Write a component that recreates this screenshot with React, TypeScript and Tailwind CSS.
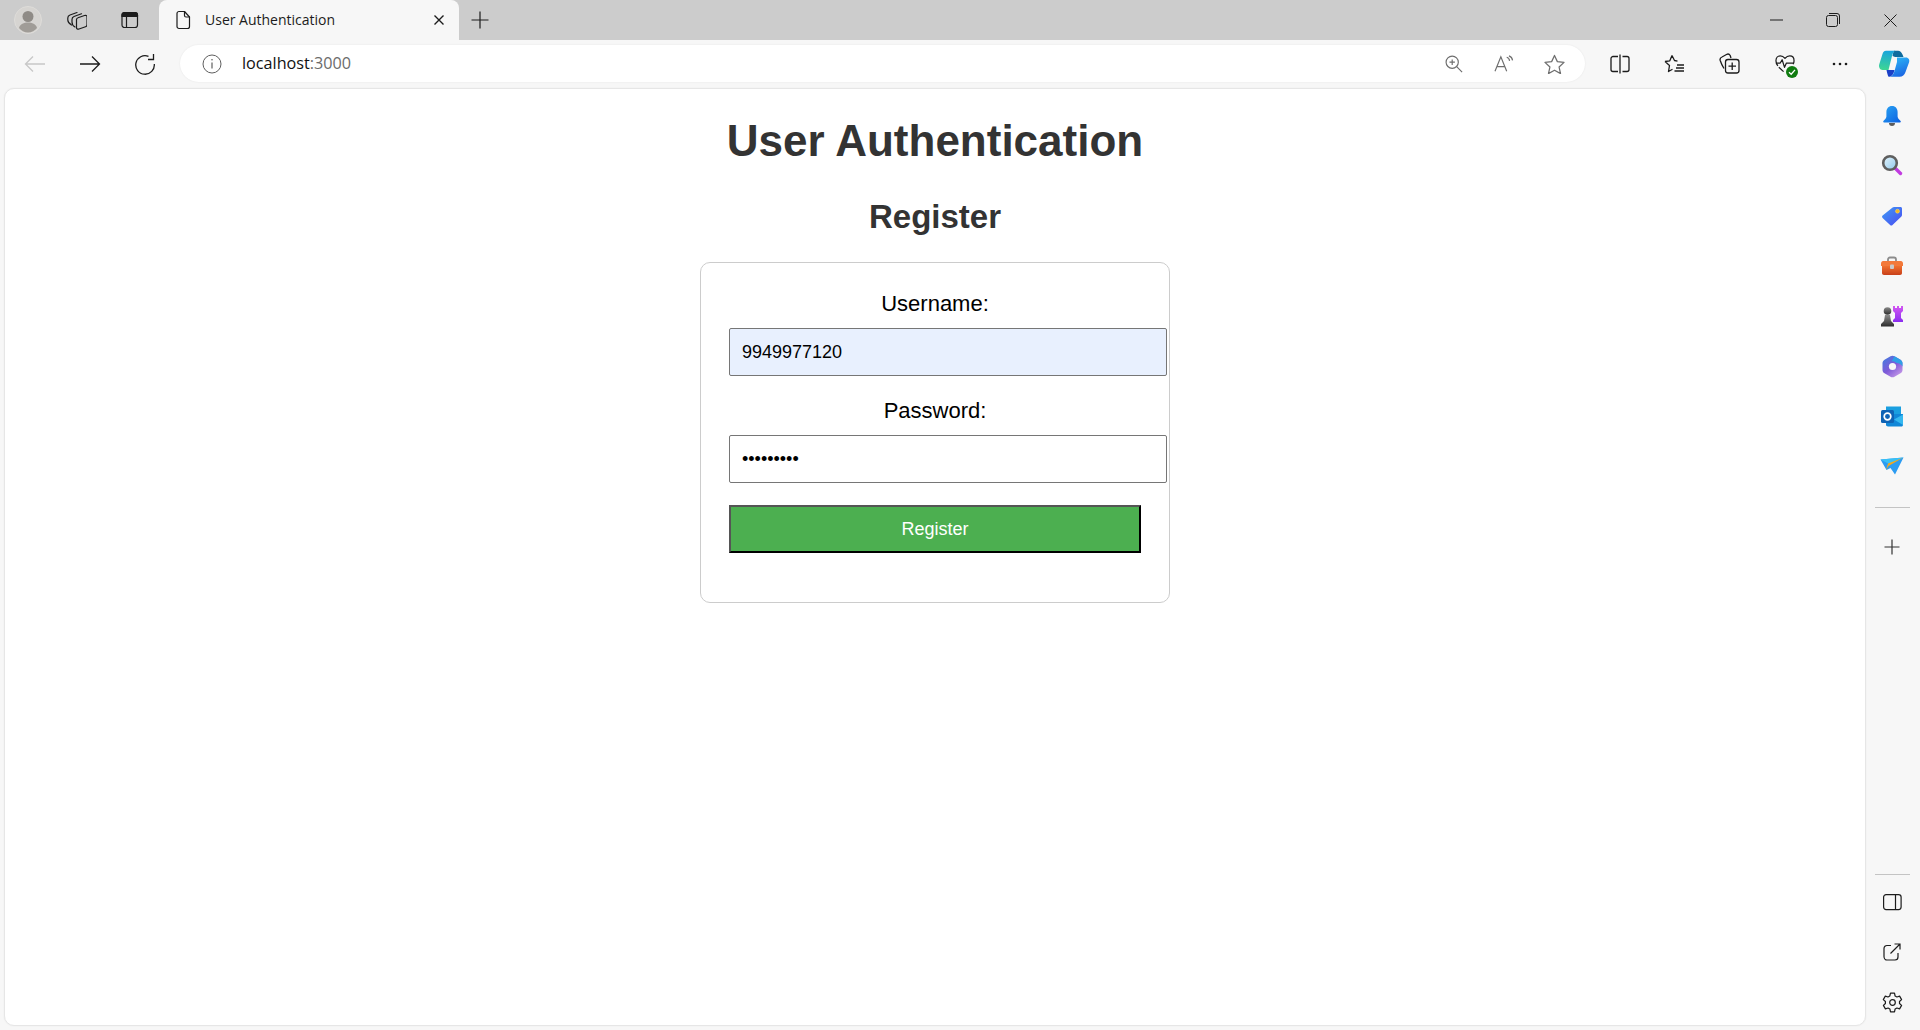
import React from "react";

const S = ({ size = 20, children, className = "" }: { size?: number; children: React.ReactNode; className?: string }) => (
  <svg width={size} height={size} viewBox="0 0 20 20" fill="none" stroke="#1c1c1c" strokeWidth={1.2} strokeLinecap="round" strokeLinejoin="round" className={className}>
    {children}
  </svg>
);

const Btn = ({ children, className = "w-[55px]" }: { children: React.ReactNode; className?: string }) => (
  <div className={`flex h-full shrink-0 items-center justify-center ${className}`}>{children}</div>
);

const SideBtn = ({ children }: { children: React.ReactNode }) => (
  <div className="flex h-[50px] w-full shrink-0 items-center justify-center">{children}</div>
);

function Copilot() {
  return (
    <svg width="32" height="28" viewBox="0 0 32 28">
      <defs>
        <linearGradient id="cpB" x1="0.3" y1="0" x2="0.7" y2="1">
          <stop offset="0" stopColor="#2ab4f6" />
          <stop offset="1" stopColor="#1b62e2" />
        </linearGradient>
        <linearGradient id="cpC" x1="0.5" y1="0" x2="0.4" y2="1">
          <stop offset="0" stopColor="#18a4dd" />
          <stop offset="1" stopColor="#3ed693" />
        </linearGradient>
      </defs>
      <path d="M16 .7h4c2 0 3.500 1.300 4.500 3.800l1 2.500H17l-2.500-1c.5-3 1-4.500 1.500-5.300z" fill="#0f6c9e" />
      <path d="M8 .7h9c-2 1.300-2.500 3.300-3 5.300l-3.500 14h-6c-2.500 0-4-3-3.300-5.500L4.500 4C5 2 6 .7 8 .7z" fill="url(#cpC)" />
      <path d="M8.500 20h8.100c-1.100 4.500-2.600 6-5.100 6.700h-1c-1-1.700-1.500-4.700-2-6.700z" fill="#1a3fc7" />
      <path d="M19 7.500h9c2.500 0 4 2.500 3 5L27.500 22c-1 3-3 4.700-6 4.700H12c2-.7 3.500-2.200 4.500-5.700L19 12z" fill="url(#cpB)" />
    </svg>
  );
}

function Bell() {
  return (
    <svg width="20" height="22" viewBox="0 0 20 22">
      <defs>
        <linearGradient id="bl" x1="0" y1="0" x2="1" y2="1">
          <stop offset="0" stopColor="#2aa5f4" />
          <stop offset="1" stopColor="#0b5fe0" />
        </linearGradient>
      </defs>
      <path d="M7 18h6a3 3 0 0 1-6 0z" fill="#5c5c5c" />
      <path d="M10 1c3.600 0 5.600 2.700 5.600 6v4.500c0 1.500 1.300 2.800 3 4.500.4.500.2 1.500-.6 1.500H2c-.8 0-1-1-.6-1.500 1.700-1.700 3-3 3-4.500V7C4.400 3.700 6.400 1 10 1z" fill="url(#bl)" />
    </svg>
  );
}

function SearchIcon() {
  return (
    <svg width="22" height="22" viewBox="0 0 22 22" className="-mt-[2px]">
      <defs>
        <linearGradient id="gl" x1="0" y1="0" x2="1" y2="1">
          <stop offset="0" stopColor="#e6f4fc" />
          <stop offset="1" stopColor="#8ec9ec" />
        </linearGradient>
      </defs>
      <path d="M14 14l5.500 5.500" stroke="#c13be0" strokeWidth="3.400" strokeLinecap="round" />
      <circle cx="9" cy="9" r="6.800" fill="url(#gl)" stroke="#5f5f5f" strokeWidth="2.600" />
    </svg>
  );
}

function Tag() {
  return (
    <svg width="22" height="20" viewBox="0 0 22 20">
      <defs>
        <linearGradient id="tg" x1="0" y1="0" x2="1" y2="1">
          <stop offset="0" stopColor="#3f9cf4" />
          <stop offset="1" stopColor="#4a4af2" />
        </linearGradient>
      </defs>
      <path d="M13 1h6.500C20.400 1 21 1.600 21 2.500V9c0 .6-.2 1-.6 1.400L11.500 19c-.7.700-1.700.700-2.400 0L1.600 12c-.7-.7-.7-1.700 0-2.400L11.600 1.600C12 1.200 12.500 1 13 1z" fill="url(#tg)" />
      <circle cx="16.500" cy="5.200" r="2" fill="#f5b921" stroke="#f8d878" strokeWidth=".5" />
    </svg>
  );
}

function Toolbox() {
  return (
    <svg width="24" height="20" viewBox="0 0 24 20">
      <defs>
        <linearGradient id="tb" x1="0" y1="0" x2="0" y2="1">
          <stop offset="0" stopColor="#f0702e" />
          <stop offset="1" stopColor="#c8401a" />
        </linearGradient>
      </defs>
      <path d="M8 6V3.500C8 2.500 8.800 1.500 10 1.500h4c1.200 0 2 1 2 2V6" fill="none" stroke="#8c8c8c" strokeWidth="1.800" />
      <path d="M1 7.500C1 6 2 5 3 5h18c1 0 2 1 2 2.500V10H1z" fill="#f3793a" />
      <path d="M2 10h20v7c0 1.200-.8 2-2 2H4c-1.200 0-2-.8-2-2z" fill="url(#tb)" />
      <rect x="10" y="8.500" width="4" height="4.500" rx="1" fill="#c9c9c9" />
    </svg>
  );
}

function Chess() {
  return (
    <svg width="24" height="22" viewBox="0 0 24 22">
      <defs>
        <linearGradient id="pw" x1="0" y1="0" x2="0" y2="1">
          <stop offset="0" stopColor="#8a8a8a" />
          <stop offset="1" stopColor="#2d2d2d" />
        </linearGradient>
        <linearGradient id="rk" x1="0" y1="0" x2="0" y2="1">
          <stop offset="0" stopColor="#d458f2" />
          <stop offset="1" stopColor="#8a2df0" />
        </linearGradient>
      </defs>
      <path d="M13 1h2v2h2V1h2v2h2V1h2v5l-2 2v5l2 2v2H13v-2l2-2V8l-2-2z" fill="url(#rk)" />
      <circle cx="7.500" cy="6" r="3.800" fill="url(#pw)" />
      <path d="M5 10h5l1 6 3 3v2.500H1V19l3-3z" fill="url(#pw)" />
    </svg>
  );
}

function M365() {
  return (
    <svg width="21" height="23" viewBox="0 0 21 23">
      <defs>
        <linearGradient id="m1" x1="0" y1="0" x2="0.8" y2="1">
          <stop offset="0" stopColor="#3a7fe0" />
          <stop offset=".55" stopColor="#7f5ad8" />
          <stop offset="1" stopColor="#c79ae8" />
        </linearGradient>
      </defs>
      <path d="M8.500 1.200c1.200-.7 2.800-.7 4 0l6 3.500c1.200.7 2 2 2 3.400v6.800c0 1.400-.8 2.700-2 3.400l-6 3.500c-1.200.7-2.800.7-4 0l-6-3.500C1.300 17.600.5 16.300.5 14.900V8.100c0-1.400.8-2.700 2-3.400z" fill="url(#m1)" />
      <path d="M12.500 1.200l6 3.500c1.200.7 2 2 2 3.400v3.400c-1.500-2-3-3.500-6-3.500-1.500-1.500-3.500-2-5-1.500z" fill="#2f9fe6" />
      <circle cx="10.500" cy="11.500" r="3.600" fill="#f7f7f7" />
    </svg>
  );
}

function Outlook() {
  return (
    <svg width="22" height="21" viewBox="0 0 22 21">
      <rect x="5" y="0.500" width="15" height="8" fill="#1a9fe0" />
      <rect x="5" y="8" width="8" height="7" fill="#0a78d4" />
      <path d="M12 8h10v11c0 .8-.7 1.500-1.500 1.500H7c-1 0-2-.8-2-1.500v-4h7z" fill="#1187d8" />
      <path d="M22 8.500V19l-9-5.500z" fill="#35b8f0" />
      <rect x="0" y="4" width="13" height="13" rx="1.500" fill="#0f63b5" />
      <circle cx="6.500" cy="10.500" r="3.300" fill="none" stroke="#fff" strokeWidth="1.700" />
    </svg>
  );
}

function Drop() {
  return (
    <svg width="24" height="18" viewBox="0 0 24 18">
      <path d="M.500 2.500 23.500.500 15 17.500l-4.500-6.500L6.500 13z" fill="#2c9cf2" />
      <path d="M.500 2.500 9 7l14.500-6.500z" fill="#38c0f6" />
      <path d="M6 13 8 6.500 22.500 1 8.500 9z" fill="#f5a81c" />
    </svg>
  );
}

export default function App() {
  return (
    <div className="flex h-[1030px] w-[1920px] flex-col overflow-hidden bg-[#f7f7f7] font-['Open_Sans','Noto_Sans',sans-serif] text-[#1c1c1c]">
      {/* Tab strip */}
      <div className="flex h-[40px] shrink-0 items-center bg-[#cccccc]">
        <div className="flex h-full w-[53px] shrink-0 items-center justify-center pl-[3px]">
          <svg width="28" height="28" viewBox="0 0 28 28">
            <circle cx="14" cy="14" r="13.500" fill="#d6d4d1" stroke="#dedcd9" />
            <circle cx="14" cy="10.500" r="5.500" fill="#8f8b86" />
            <path d="M5 22c1-4 5-5.500 9-5.500s8 1.500 9 5.500c-2 2.500-5.500 4.500-9 4.500S7 24.500 5 22z" fill="#a09c97" />
          </svg>
        </div>
        <Btn className="w-[48px]">
          <S>
            <path d="M9.500 9.500c0-1 .5-1.500 1.500-1.800l6.500-2.200c1.500-.5 2.500.3 2.500 1.500v7.500c0 1.300-.5 2-1.500 2.300L12 19c-1.500.5-2.500-.2-2.500-1.500z" />
            <path d="M8 17c-2-1-3-3-3-5V9.500c0-1.500.7-2.500 2-3l7.500-2.700" />
            <path d="M4.500 15C2 13.500.8 12 .8 10V8c0-1.500.7-2.500 2.200-3l7-2.500" />
          </S>
        </Btn>
        <Btn className="w-[58px]">
          <S size={20}>
            <rect x="2" y="2.500" width="15.500" height="15" rx="2.500" />
            <path d="M2 6.500V5a2.500 2.500 0 0 1 2.500-2.500H15A2.500 2.500 0 0 1 17.500 5v1.500z" fill="#1c1c1c" />
            <path d="M6.500 6.500v11" />
          </S>
        </Btn>
        {/* Active tab */}
        <div className="flex h-full w-[300px] shrink-0 items-center rounded-t-[8px] bg-[#f7f7f7]">
          <div className="flex w-[46px] shrink-0 justify-center pl-[2px]">
            <S size={20}>
              <path d="M4 3.500C4 2.500 5 1.500 6 1.500h5.500l5 5.500v9.500c0 1-1 2-2 2H6c-1 0-2-1-2-2z" />
              <path d="M11.500 1.500V5.500c0 1 .7 1.500 1.500 1.500h3.500" />
            </S>
          </div>
          <span className="flex-1 text-[14px] leading-none whitespace-nowrap">User Authentication</span>
          <div className="flex w-[40px] shrink-0 justify-center">
            <svg width="12" height="12" viewBox="0 0 12 12" stroke="#1c1c1c" strokeWidth="1.400">
              <path d="M1.500 1.500l9 9M10.500 1.500l-9 9" />
            </svg>
          </div>
        </div>
        <Btn className="w-[42px]">
          <svg width="18" height="18" viewBox="0 0 18 18" stroke="#1c1c1c" strokeWidth="1.200">
            <path d="M9 .500v17M.500 9h17" />
          </svg>
        </Btn>
        <div className="flex-1" />
        <Btn className="w-[58px]">
          <svg width="13" height="2" viewBox="0 0 13 2" stroke="#1c1c1c" strokeWidth="1"><path d="M0 1h13" /></svg>
        </Btn>
        <Btn className="w-[58px] pr-[2px]">
          <svg width="14" height="14" viewBox="0 0 14 14" fill="none" stroke="#1c1c1c" strokeWidth="1">
            <rect x=".5" y="2.500" width="11" height="11" rx="2" />
            <path d="M3 .5h8a2.500 2.500 0 0 1 2.500 2.500v8" />
          </svg>
        </Btn>
        <Btn className="w-[57px] pr-[2px]">
          <svg width="13" height="13" viewBox="0 0 13 13" stroke="#1c1c1c" strokeWidth="1"><path d="M.5.5l12 12M12.500.5l-12 12" /></svg>
        </Btn>
      </div>

      {/* Toolbar */}
      <div className="flex h-[48px] shrink-0 items-center pb-[1px] pl-[7px]">
        <Btn>
          <svg width="22" height="18" viewBox="0 0 22 18" fill="none" stroke="#c8c8c8" strokeWidth="1.300"><path d="M21 9H1.500M9 1.500 1.500 9 9 16.500" /></svg>
        </Btn>
        <Btn>
          <svg width="22" height="18" viewBox="0 0 22 18" fill="none" stroke="#1c1c1c" strokeWidth="1.300"><path d="M1 9h19.500M13 1.500 20.500 9 13 16.500" /></svg>
        </Btn>
        <Btn>
          <svg width="22" height="22" viewBox="0 0 22 22" fill="none" stroke="#1c1c1c" strokeWidth="1.300">
            <path d="M14.500 3.300A9.300 9.300 0 1 0 20.300 11" />
            <path d="M19.500 1v5.500H14" />
          </svg>
        </Btn>
        <div className="ml-[8px] flex h-[37px] flex-1 items-center rounded-full bg-white pr-[6px] shadow-[0_0_2px_rgba(0,0,0,0.08)]">
          <div className="flex w-[62px] shrink-0 justify-center pl-[2px]">
            <svg width="20" height="20" viewBox="0 0 20 20" fill="none" stroke="#5f5f5f" strokeWidth="1">
              <circle cx="10" cy="10" r="9" />
              <path d="M10 8.500v6" strokeWidth="1.200" />
              <circle cx="10" cy="5.800" r=".8" fill="#5f5f5f" stroke="none" />
            </svg>
          </div>
          <span className="flex-1 text-[16.200px] leading-none text-[#111]">
            localhost<span className="text-[#6b6b6b]">:3000</span>
          </span>
          <div className="flex w-[50px] shrink-0 justify-center">
            <svg width="18" height="18" viewBox="0 0 20 20" fill="none" stroke="#6e6e6e" strokeWidth="1.300">
              <circle cx="8" cy="8" r="6.800" />
              <path d="M13 13l6 6M8 5v6M5 8h6" />
            </svg>
          </div>
          <div className="flex w-[50px] shrink-0 justify-center">
            <svg width="20" height="18" viewBox="0 0 22 20" fill="none" stroke="#6e6e6e" strokeWidth="1.300">
              <path d="M1 18 7.500 2 14 18M3.300 13h8.400" />
              <path d="M14 2.500c2 .5 3 2 3.200 4M16.500 1c2.200.7 3.700 2.500 4 5" />
            </svg>
          </div>
          <div className="flex w-[50px] shrink-0 justify-center">
            <svg width="21" height="20" viewBox="0 0 22 21" fill="none" stroke="#6e6e6e" strokeWidth="1.300" strokeLinejoin="round">
              <path d="M11 1.500 14 8l7 .8-5.200 4.800 1.500 7L11 17l-6.300 3.600 1.500-7L1 8.800 8 8z" />
            </svg>
          </div>
        </div>
        <div className="w-[7px] shrink-0" />
        <Btn>
          <svg width="20" height="20" viewBox="0 0 20 20" fill="none" stroke="#1c1c1c" strokeWidth="1.300">
            <path d="M8 2.500H3C2 2.500 1 3.500 1 4.500v11c0 1 1 2 2 2h5M10 .5v19M12.500 2.500H17c1 0 2 1 2 2v11c0 1-1 2-2 2h-4.500" />
          </svg>
        </Btn>
        <Btn>
          <svg width="21" height="20" viewBox="0 0 21 20" fill="none" stroke="#1c1c1c" strokeWidth="1.300" strokeLinejoin="round">
            <path d="M8 1.500 10.500 6.500l3 .6M1 7.500l4.500 4-1 6 4-2.200M1 7.500l4.800-.7L8 1.500" />
            <path d="M13 11h7M12 14h8M10.500 17h9.500" />
          </svg>
        </Btn>
        <Btn>
          <svg width="21" height="21" viewBox="0 0 21 21" fill="none" stroke="#1c1c1c" strokeWidth="1.300">
            <path d="M5 15.500C3.500 13 2 10 1.200 7.500.8 6 1.500 4.500 3 4l4.500-2.500c1.500-.8 3-.2 3.700 1L12 5" />
            <rect x="6.500" y="6.500" width="13.500" height="13.500" rx="2.500" />
            <path d="M13.200 9.500v7.500M9.500 13.200h7.500" />
          </svg>
        </Btn>
        <Btn>
          <div className="relative flex h-[20px] w-[20px] items-center justify-center">
            <svg width="21" height="20" viewBox="0 0 21 20" fill="none" stroke="#1c1c1c" strokeWidth="1.300" strokeLinejoin="round">
              <path d="M3 12C1.500 10 1 8.500 1 6.500 1 3.500 3 1.500 5.500 1.500c2 0 3.700 1 5 2.500 1.300-1.500 3-2.500 5-2.500 2.500 0 4.500 2 4.500 5 0 1.500-.3 2.500-1 3.700" />
              <path d="M1 9h4.500L7.500 5.500l2.500 8L12 9h8" />
              <path d="M4 13.500 9 18" />
            </svg>
            <div className="absolute right-[-3px] bottom-[-4px] flex h-[12px] w-[12px] items-center justify-center rounded-full bg-[#107c10]">
              <svg width="8" height="8" viewBox="0 0 8 8" fill="none" stroke="#fff" strokeWidth="1.300"><path d="M1 4.200 3.200 6.200 7 1.800" /></svg>
            </div>
          </div>
        </Btn>
        <Btn>
          <svg width="16" height="4" viewBox="0 0 16 4" fill="#1c1c1c"><circle cx="2" cy="2" r="1.300" /><circle cx="8" cy="2" r="1.300" /><circle cx="14" cy="2" r="1.300" /></svg>
        </Btn>
        <Btn className="w-[53px]">
          <Copilot />
        </Btn>
      </div>

      {/* Body */}
      <div className="flex min-h-0 flex-1 pl-[4px]">
        <main className="h-[938px] w-[1862px] shrink-0 rounded-[10px] border border-[#e6e6e6] bg-white text-center font-['Liberation_Sans',sans-serif] shadow-[0_0_2px_rgba(0,0,0,0.06)]">
          <h1 className="mt-[27px] text-[44px] leading-[50px] font-bold text-[#333333]">User Authentication</h1>
          <h2 className="mt-[32px] text-[33px] leading-[38px] font-bold text-[#333333]">Register</h2>
          <form className="mx-auto mt-[26px] h-[341px] w-[470px] rounded-[10px] border border-[#cccccc] px-[28px] pt-[28px] text-left">
            <label className="block text-center text-[22px] leading-[25px] text-black">Username:</label>
            <input
              type="text"
              readOnly
              value="9949977120"
              className="mt-[12px] box-content block h-[22px] w-full rounded-[2px] border border-[#767676] bg-[#e8f0fe] px-[12px] py-[12px] font-['Liberation_Sans',sans-serif] text-[18px] text-black outline-none"
            />
            <label className="mt-[22px] block text-center text-[22px] leading-[25px] text-black">Password:</label>
            <input
              type="password"
              readOnly
              value="123456789"
              className="mt-[12px] box-content block h-[22px] w-full rounded-[2px] border border-[#767676] bg-white px-[12px] py-[12px] font-['Liberation_Sans',sans-serif] text-[18px] text-black outline-none"
            />
            <button
              type="button"
              className="mt-[22px] block h-[48px] w-full border-2 border-t-[#555555] border-r-black border-b-black border-l-[#555555] bg-[#4caf50] font-['Liberation_Sans',sans-serif] text-[18px] text-white"
            >
              Register
            </button>
          </form>
        </main>

        {/* Sidebar */}
        <aside className="flex h-full w-[54px] shrink-0 flex-col items-center pt-[3px] pr-[2px] pb-[3px]">
          <SideBtn><Bell /></SideBtn>
          <SideBtn><SearchIcon /></SideBtn>
          <SideBtn><Tag /></SideBtn>
          <SideBtn><Toolbox /></SideBtn>
          <SideBtn><Chess /></SideBtn>
          <SideBtn><M365 /></SideBtn>
          <SideBtn><Outlook /></SideBtn>
          <SideBtn><Drop /></SideBtn>
          <div className="mt-[16px] h-px w-[35px] shrink-0 bg-[#c4c4c4]" />
          <div className="mt-[14px] flex h-[50px] w-full shrink-0 items-center justify-center">
            <svg width="16" height="16" viewBox="0 0 16 16" stroke="#333" strokeWidth="1.200"><path d="M8 .5v15M.5 8h15" /></svg>
          </div>
          <div className="flex-1" />
          <div className="h-px w-[35px] shrink-0 bg-[#c4c4c4]" />
          <div className="mt-[2px] flex h-[50px] w-full shrink-0 items-center justify-center">
            <svg width="19" height="17" viewBox="0 0 19 17" fill="none" stroke="#1c1c1c" strokeWidth="1.200">
              <rect x=".6" y=".6" width="17.500" height="15" rx="2.500" />
              <path d="M12.500.6v15" />
            </svg>
          </div>
          <SideBtn>
            <svg width="18" height="18" viewBox="0 0 18 18" fill="none" stroke="#1c1c1c" strokeWidth="1.200">
              <path d="M8 2.500H4c-1.500 0-3 1-3 3v8c0 2 1.500 3.500 3 3.500h8c2 0 3-1.500 3-3v-4" />
              <path d="M7.500 10.500 17 1M11.500 1H17v5.500" />
            </svg>
          </SideBtn>
          <SideBtn>
            <svg width="21" height="21" viewBox="0 0 21 21" fill="none" stroke="#1c1c1c" strokeWidth="1.200" strokeLinejoin="round">
              <path d="M8.500 1.200h4l.6 2.800 1.800 1 2.700-.9 2 3.500-2.100 1.900v2l2.100 1.900-2 3.500-2.700-.9-1.800 1-.6 2.800h-4l-.6-2.800-1.800-1-2.700.9-2-3.500L3.400 11.500v-2L1.300 7.600l2-3.500 2.700.9 1.800-1z" />
              <circle cx="10.500" cy="10.500" r="2.800" />
            </svg>
          </SideBtn>
        </aside>
      </div>
    </div>
  );
}
